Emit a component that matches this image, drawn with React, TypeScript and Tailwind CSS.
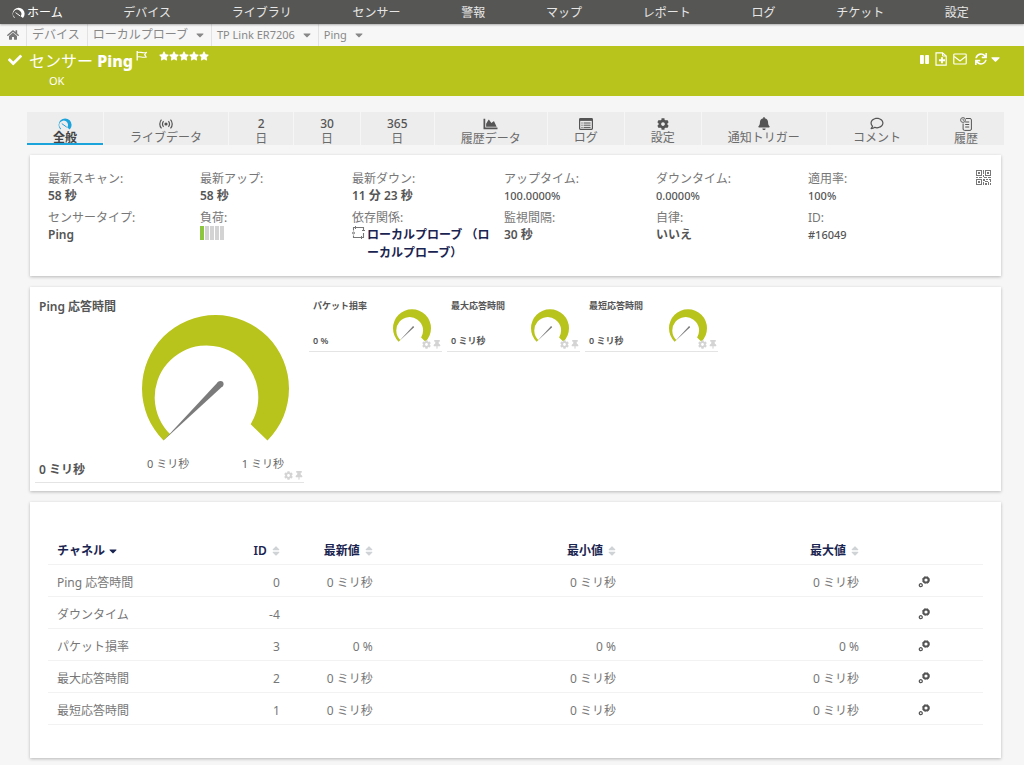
import type { ReactNode } from "react";
import {
  FaBell,
  FaCaretDown,
  FaChartArea,
  FaCheck,
  FaCog,
  FaHome,
  FaPause,
  FaRegComment,
  FaSort,
  FaStar,
  FaSync,
  FaThumbtack,
} from "react-icons/fa";

const NAV_ITEMS = [
  "デバイス",
  "ライブラリ",
  "センサー",
  "警報",
  "マップ",
  "レポート",
  "ログ",
  "チケット",
  "設定",
];

const CHANNELS = [
  { name: "Ping 応答時間", id: 0, value: "0 ミリ秒" },
  { name: "ダウンタイム", id: -4, value: "" },
  { name: "パケット損率", id: 3, value: "0 %" },
  { name: "最大応答時間", id: 2, value: "0 ミリ秒" },
  { name: "最短応答時間", id: 1, value: "0 ミリ秒" },
];

const SMALL_GAUGES = [
  { title: "パケット損率", value: "0 %" },
  { title: "最大応答時間", value: "0 ミリ秒" },
  { title: "最短応答時間", value: "0 ミリ秒" },
];

function DialIcon({ className }: { className?: string }) {
  return (
    <svg viewBox="0 0 14 12" className={className} fill="none" stroke="currentColor">
      <path
        d="M2.4 11.4A6.5 6.5 0 1 1 11.8 11.4L9.3 9.4A4.4 4.4 0 1 0 3.1 10.600Z"
        fill="currentColor"
        stroke="none"
      />
      <path d="m3.8 5.6 5 3.6" strokeWidth="1" />
    </svg>
  );
}

function LiveIcon() {
  return (
    <svg viewBox="0 0 14 10" className="h-[10px] w-[14px]" fill="none" stroke="currentColor">
      <circle cx="7" cy="5" r="1.6" fill="currentColor" stroke="none" />
      <path d="M4.6 2.3a3.8 3.8 0 0 0 0 5.4M9.4 2.3a3.8 3.8 0 0 1 0 5.4" strokeWidth="1.2" />
      <path d="M2.5.6a6.5 6.5 0 0 0 0 8.8M11.5.6a6.5 6.5 0 0 1 0 8.8" strokeWidth="1.2" />
    </svg>
  );
}

function ListIcon() {
  return (
    <svg viewBox="0 0 14 12" className="h-3 w-[14px]" fill="none" stroke="currentColor">
      <rect x=".6" y=".6" width="12.8" height="10.8" rx=".8" strokeWidth="1.2" />
      <path d="M1 1.8h12" strokeWidth="2.2" />
      <path d="M2.4 5h1.2M4.6 5h7M2.4 7.2h1.2M4.6 7.2h7M2.4 9.4h1.2M4.6 9.4h7" />
    </svg>
  );
}

function HistoryIcon() {
  return (
    <svg viewBox="0 0 12 14" className="h-[14px] w-3" fill="none" stroke="currentColor">
      <circle cx="3" cy="3" r="2.4" strokeWidth=".9" />
      <path d="M3 1.7V3.2h1.2" strokeWidth=".8" />
      <path d="M6 1.5h4A1.4 1.4 0 0 1 11.4 2.9V12a1.4 1.4 0 0 1-1.4 1.4H4.5A1.4 1.4 0 0 1 3.1 12V6.5" />
      <path d="M5.2 5h4M5.2 7.5h4M5.2 10h4" />
    </svg>
  );
}

function FlagIcon() {
  return (
    <svg viewBox="0 0 11 10" className="h-[10px] w-[11px]" fill="none" stroke="currentColor">
      <path d="M1.2 0v9.5" strokeWidth="1.3" />
      <path d="M1.5 1.5c2.5-1 4.5 1 8.7 0L8.7 3.7l1.5 2.3c-4 1-6.2-1-8.7 0" strokeWidth="1.2" />
    </svg>
  );
}

function FilePlusIcon() {
  return (
    <svg viewBox="0 0 12 14" className="h-[14px] w-3" fill="none" stroke="currentColor">
      <path d="M1 .8h6.5L11.2 4v9.2H1Z" strokeWidth="1.2" />
      <path d="M7.5.8V4h3.7" />
      <path d="M7 5.2v6M4 8.2h6" strokeWidth="2" />
    </svg>
  );
}

function MailIcon() {
  return (
    <svg viewBox="0 0 14 12" className="h-3 w-[14px]" fill="none" stroke="currentColor" strokeWidth="1.2">
      <rect x=".8" y="1" width="12.4" height="10" rx=".8" />
      <path d="M1.2 3.6 7 8l5.8-4.4" />
    </svg>
  );
}

function DependencyIcon() {
  return (
    <svg viewBox="0 0 13 13" className="h-[13px] w-[13px] shrink-0" fill="none" stroke="currentColor">
      <path d="M1.5 4.500V1.500H11.500V4M11.500 7v4.500H1.500V9.500" strokeWidth="1.1" />
      <path d="M3.5 0v3M13 4.500h-3M9.500 10V13" />
      <circle cx="1.500" cy="7" r="1" />
    </svg>
  );
}

function QrIcon() {
  return (
    <svg viewBox="0 0 15 15" className="h-[15px] w-[15px]" fill="none" stroke="currentColor">
      <rect x=".5" y=".5" width="5" height="5" />
      <rect x="9.5" y=".5" width="5" height="5" />
      <rect x=".5" y="9.5" width="5" height="5" />
      <path
        d="M2 2h2v2H2ZM11 2h2v2h-2ZM2 11h2v2H2ZM7 0h1v4H7ZM7 5h1v2H7ZM0 7h2v1H0ZM3 7h3v1H3ZM8 7h3v1H8ZM12 7h3v1h-3ZM7 9h2v2H7ZM10 9h2v1h-2ZM13 9h2v3h-1v-2h-1ZM9 11h3v1H9ZM7 12h1v3H7ZM9 13h2v2H9ZM12 12h1v3h-1ZM14 13h1v2h-1Z"
        fill="currentColor"
        stroke="none"
      />
    </svg>
  );
}

function GearsIcon() {
  return (
    <svg viewBox="0 0 12 12" className="h-3 w-3" fill="none" stroke="currentColor">
      <circle cx="8" cy="4" r="2.6" strokeWidth="2" />
      <circle cx="8" cy="4" r="3.6" strokeWidth=".6" strokeDasharray="1.5 1.4" />
      <circle cx="2.8" cy="9.2" r="1.5" strokeWidth="1.3" />
    </svg>
  );
}

function Gauge({ className }: { className: string }) {
  return (
    <svg viewBox="0 0 147 126" className={className}>
      <path
        d="M21.5 125.5A73.5 73.5 0 1 1 125.5 125.5L108.7 109.3A51.8 51.8 0 1 0 28 119Z"
        fill="#b8c41b"
      />
      <path d="M21.5 125.5 76.2 66.8 80.6 71.2Z" fill="#7b7b7b" />
      <circle cx="78.5" cy="69" r="3.1" fill="#7b7b7b" />
    </svg>
  );
}

function GaugeActions() {
  return (
    <div className="absolute right-px bottom-0.5 flex gap-0.5 text-[#d4d4d4]">
      <button type="button" aria-label="チャネル設定">
        <FaCog className="h-[9px] w-[9px]" />
      </button>
      <button type="button" aria-label="固定">
        <FaThumbtack className="h-[9px] w-2" />
      </button>
    </div>
  );
}

function Card({ children, className = "" }: { children: ReactNode; className?: string }) {
  return (
    <section className={`bg-white shadow-[0_1px_3px_rgba(0,0,0,0.25)] ${className}`}>
      {children}
    </section>
  );
}

function Tab({
  label,
  icon,
  active = false,
}: {
  label: string;
  icon: ReactNode;
  active?: boolean;
}) {
  return (
    <a
      href="#"
      className={`flex h-[33px] flex-auto flex-col items-center gap-px bg-[#ededed] pt-[5px] leading-[14px] ${
        active
          ? "font-semibold text-[#444] shadow-[inset_0_-2px_0_#1ba3dc]"
          : "text-[#6b6b6b]"
      }`}
    >
      <span className="flex h-[14px] items-center font-medium text-[#555]">{icon}</span>
      <span>{label}</span>
    </a>
  );
}

function Info({ label, numeric = false, children }: { label: string; numeric?: boolean; children: ReactNode }) {
  return (
    <div>
      <dt className="leading-[17px]">{label}</dt>
      <dd className={`text-[#555] ${numeric ? "text-[11px] font-medium" : "font-semibold"}`}>{children}</dd>
    </div>
  );
}

function Crumb({
  label,
  menu = false,
  latin = false,
  last = false,
}: {
  label: string;
  menu?: boolean;
  latin?: boolean;
  last?: boolean;
}) {
  return (
    <li
      className={`flex items-center gap-2 pr-[7px] pl-[5px] ${latin ? "text-[11px]" : ""} ${
        last ? "" : "border-r border-[#e2e2e2]"
      }`}
    >
      <a href="#">{label}</a>
      {menu && <FaCaretDown className="h-3 w-2" />}
    </li>
  );
}

function SortHeader({ label, className = "" }: { label: string; className?: string }) {
  return (
    <th className={`px-2 text-right font-semibold ${className}`}>
      <button type="button" className="inline-flex items-center gap-[5px]">
        {label}
        <FaSort className="h-3 w-2 text-[#d0d3d6]" />
      </button>
    </th>
  );
}

export default function App() {
  return (
    <div className="min-h-screen bg-[#f6f6f6] font-['Noto_Sans','Noto_Sans_CJK_JP',sans-serif] text-[12px] leading-[18px] text-[#777]">
      <nav className="relative flex h-6 items-center justify-between bg-[#565654] pt-0.5 pr-[55px] pl-3 text-[#e6e6e6] shadow-[0_1px_2px_rgba(0,0,0,0.3)]">
        <a href="#" className="flex items-center gap-0.5 text-white">
          <DialIcon className="h-3 w-[13px]" />
          ホーム
        </a>
        {NAV_ITEMS.map((item) => (
          <a key={item} href="#">
            {item}
          </a>
        ))}
      </nav>

      <ol className="flex h-[22px] bg-[#f7f7f7] text-[#888]">
        <li className="flex items-center border-r border-[#e2e2e2] px-[7px]">
          <a href="#" aria-label="ホーム">
            <FaHome className="h-3 w-3 text-[#777]" />
          </a>
        </li>
        <Crumb label="デバイス" />
        <Crumb label="ローカルプローブ" menu />
        <Crumb label="TP Link ER7206" menu latin />
        <Crumb label="Ping" menu latin last />
      </ol>

      <header className="flex h-[50px] justify-between bg-[#b8c41b] px-2 text-white">
        <div>
          <div className="flex">
            <FaCheck className="mt-[7px] mr-[7px] h-[14px] w-[14px]" />
            <h1 className="mt-[3px] text-[16px] leading-6">
              センサー <b className="font-extrabold">Ping</b>
            </h1>
            <button type="button" aria-label="フラグ" className="mt-[5px] ml-[3px] h-[10px]">
              <FlagIcon />
            </button>
            <div className="mt-[5px] ml-3 flex h-[10px]">
              {[1, 2, 3, 4, 5].map((n) => (
                <FaStar key={n} className="h-[10px] w-[10px]" />
              ))}
            </div>
          </div>
          <p className="pl-[41px] text-[11px] leading-4">OK</p>
        </div>
        <div className="mr-4 flex h-[26px] items-center gap-[6px]">
          <button type="button" aria-label="一時停止">
            <FaPause className="h-[11px] w-[9px]" />
          </button>
          <button type="button" aria-label="レポートに追加">
            <FilePlusIcon />
          </button>
          <button type="button" aria-label="メール送信">
            <MailIcon />
          </button>
          <button type="button" aria-label="更新" className="ml-0.5 flex items-center gap-1">
            <FaSync className="h-3 w-3" />
            <FaCaretDown className="h-[14px] w-[9px]" />
          </button>
        </div>
      </header>

      <main className="pt-4 pb-[7px]">
        <nav className="mr-5 ml-[27px] flex gap-px">
          <Tab active label="全般" icon={<DialIcon className="h-3 w-[14px] text-[#1ba3dc]" />} />
          <Tab label="ライブデータ" icon={<LiveIcon />} />
          <Tab label="日" icon="2" />
          <Tab label="日" icon="30" />
          <Tab label="日" icon="365" />
          <Tab label="履歴データ" icon={<FaChartArea className="h-[14px] w-[15px]" />} />
          <Tab label="ログ" icon={<ListIcon />} />
          <Tab label="設定" icon={<FaCog className="h-3 w-3" />} />
          <Tab label="通知トリガー" icon={<FaBell className="h-[13px] w-3" />} />
          <Tab label="コメント" icon={<FaRegComment className="h-[13px] w-[14px]" />} />
          <Tab label="履歴" icon={<HistoryIcon />} />
        </nav>

        <div className="mt-[10px] mr-[23px] ml-[30px] flex flex-col gap-[11px]">
          <Card className="flex gap-4 pt-[15px] pr-[10px] pb-[14px] pl-[18px]">
            <dl className="grid flex-1 grid-cols-6 gap-y-1">
              <Info label="最新スキャン:">58 秒</Info>
              <Info label="最新アップ:">58 秒</Info>
              <Info label="最新ダウン:">11 分 23 秒</Info>
              <Info label="アップタイム:" numeric>100.0000%</Info>
              <Info label="ダウンタイム:" numeric>0.0000%</Info>
              <Info label="適用率:" numeric>100%</Info>
              <Info label="センサータイプ:">Ping</Info>
              <Info label="負荷:">
                <span className="flex gap-px">
                  <span className="h-[14px] w-1 bg-[#8cc63f]" />
                  <span className="h-[14px] w-1 bg-[#d3d3d3]" />
                  <span className="h-[14px] w-1 bg-[#d3d3d3]" />
                  <span className="h-[14px] w-1 bg-[#d3d3d3]" />
                  <span className="h-[14px] w-1 bg-[#d3d3d3]" />
                </span>
              </Info>
              <Info label="依存関係:">
                <span className="flex gap-0.5 pr-2 text-[#777]">
                  <DependencyIcon />
                  <a href="#" className="font-bold text-[#1a2450] [line-break:anywhere]">
                    ローカルプローブ （ローカルプローブ）
                  </a>
                </span>
              </Info>
              <Info label="監視間隔:">30 秒</Info>
              <Info label="自律:">いいえ</Info>
              <Info label="ID:" numeric>#16049</Info>
            </dl>
            <button type="button" aria-label="QRコード" className="h-[15px] text-[#777]">
              <QrIcon />
            </button>
          </Card>

          <Card className="flex gap-[5px] px-[5px] pb-2">
            <article className="relative w-[269px] border-b border-[#e4e4e4] pt-3">
              <h2 className="pl-1 leading-4 font-semibold text-[#555]">Ping 応答時間</h2>
              <Gauge className="ml-[107px] h-[126px] w-[147px]" />
              <div className="flex h-[41px] items-start pl-1">
                <strong className="w-[108px] pt-5 font-semibold text-[#555]">0 ミリ秒</strong>
                <span className="flex w-[137px] justify-between pt-[14px] text-[11px] text-[#666]">
                  <span>0 ミリ秒</span>
                  <span>1 ミリ秒</span>
                </span>
              </div>
              <GaugeActions />
            </article>
            {SMALL_GAUGES.map((gauge) => (
              <article
                key={gauge.title}
                className="relative flex h-[65px] w-[133px] justify-between border-b border-[#e4e4e4] pr-[11px] pl-1 text-[9px] leading-[14px] text-[#555]"
              >
                <div className="flex flex-col justify-between pt-3 pb-[3px]">
                  <h2 className="font-semibold">{gauge.title}</h2>
                  <strong className="font-semibold">{gauge.value}</strong>
                </div>
                <Gauge className="mt-[22px] h-[33px] w-[38px]" />
                <GaugeActions />
              </article>
            ))}
          </Card>

          <Card className="px-[18px] pt-9 pb-[33px]">
            <table className="w-full table-fixed">
              <thead>
                <tr className="h-[26px] border-b border-[#f2f2f2] text-[#1a2450]">
                  <th className="px-[9px] text-left font-semibold">
                    <button type="button" className="inline-flex items-center gap-1">
                      チャネル
                      <FaCaretDown className="h-3 w-2" />
                    </button>
                  </th>
                  <SortHeader label="ID" className="w-24" />
                  <SortHeader label="最新値" className="w-[93px]" />
                  <SortHeader label="最小値" className="w-[26%]" />
                  <SortHeader label="最大値" className="w-[26%]" />
                  <th className="w-[116px]" aria-label="操作" />
                </tr>
              </thead>
              <tbody>
                {CHANNELS.map((channel) => (
                  <tr key={channel.id} className="h-8 border-b border-[#f2f2f2]">
                    <td className="px-[9px] pt-1.5">{channel.name}</td>
                    <td className="px-2 pt-1.5 text-right">{channel.id}</td>
                    <td className="px-2 pt-1.5 text-right">{channel.value}</td>
                    <td className="px-2 pt-1.5 text-right">{channel.value}</td>
                    <td className="px-2 pt-1.5 text-right">{channel.value}</td>
                    <td className="pt-1 pl-[51px]">
                      <button type="button" aria-label="チャネル設定" className="block text-[#555]">
                        <GearsIcon />
                      </button>
                    </td>
                  </tr>
                ))}
              </tbody>
            </table>
          </Card>
        </div>
      </main>
    </div>
  );
}
